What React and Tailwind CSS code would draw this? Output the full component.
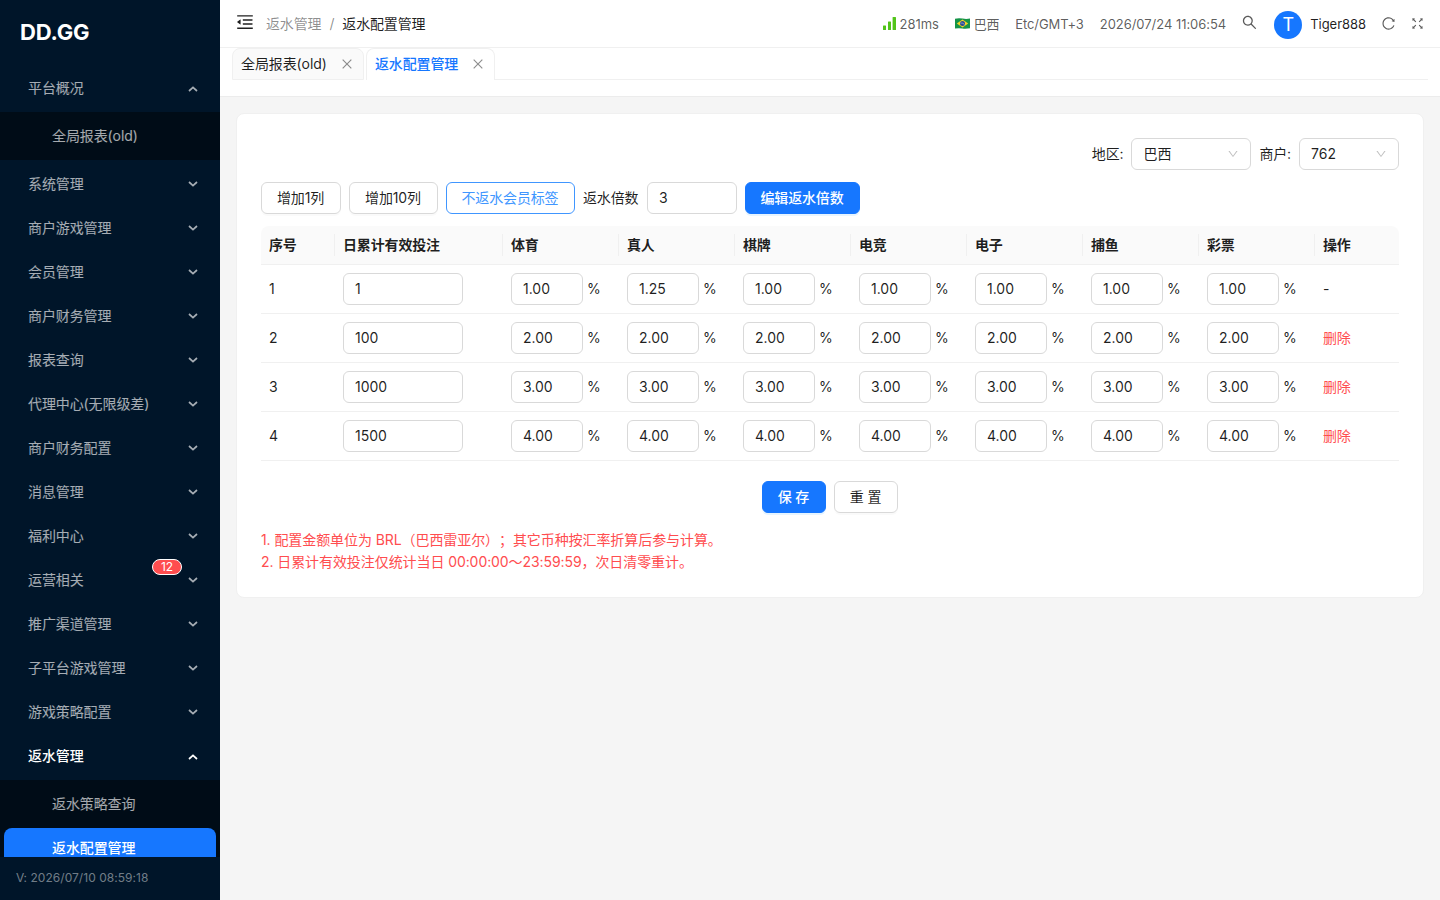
import {
  AiOutlineClose,
  AiOutlineDown,
  AiOutlineFullscreen,
  AiOutlineMenuFold,
  AiOutlineReload,
  AiOutlineSearch,
} from "react-icons/ai";

const MENU_TOP = [
  { title: "平台概况", open: true },
];

const MENU = [
  { title: "系统管理" },
  { title: "商户游戏管理" },
  { title: "会员管理" },
  { title: "商户财务管理" },
  { title: "报表查询" },
  { title: "代理中心(无限级差)" },
  { title: "商户财务配置" },
  { title: "消息管理" },
  { title: "福利中心" },
  { title: "运营相关", badge: 12 },
  { title: "推广渠道管理" },
  { title: "子平台游戏管理" },
  { title: "游戏策略配置" },
  { title: "返水管理", open: true, selected: true },
];

const CATEGORIES = ["体育", "真人", "棋牌", "电竞", "电子", "捕鱼", "彩票"];

const ROWS = [
  { id: 1, bet: "1", rates: ["1.00", "1.25", "1.00", "1.00", "1.00", "1.00", "1.00"] },
  { id: 2, bet: "100", rates: Array(7).fill("2.00") },
  { id: 3, bet: "1000", rates: Array(7).fill("3.00") },
  { id: 4, bet: "1500", rates: Array(7).fill("4.00") },
];

const Arrow = ({ open }) => (
  <svg
    width="10"
    height="6"
    viewBox="0 0 10 6"
    fill="none"
    stroke="currentColor"
    strokeWidth="1.7"
    className={open ? "mt-px shrink-0" : "mb-px shrink-0"}
  >
    <path d={open ? "M1 5 5 1.4 9 5" : "M1 1 5 4.6 9 1"} />
  </svg>
);

const MenuItem = ({ item }) => (
  <div
    className={`relative mx-1 my-1 flex h-10 shrink-0 items-center justify-between pr-[18px] pl-6 ${
      item.selected ? "font-medium text-white" : "text-white/65"
    }`}
  >
    <span>{item.title}</span>
    <Arrow open={item.open} />
    {item.badge && (
      <span className="absolute top-[-1px] right-[34px] flex h-[16px] w-[30px] items-center justify-center rounded-full border border-white bg-[#ff4d4f] text-xs leading-none text-white">
        {item.badge}
      </span>
    )}
  </div>
);

const Sidebar = () => (
  <aside className="flex h-full w-[220px] shrink-0 flex-col bg-[#001529] tracking-[-0.1px]">
    <div className="flex h-16 shrink-0 items-center pl-5 text-[22px] font-bold tracking-[-0.15px] text-white">
      DD.GG
    </div>
    <nav className="flex min-h-0 flex-1 flex-col overflow-hidden">
      {MENU_TOP.map((item) => (
        <MenuItem key={item.title} item={item} />
      ))}
      <div className="flex h-12 shrink-0 items-center bg-[#000c17] pl-[52px] text-white/65">
        全局报表(old)
      </div>
      <div className="flex shrink-0 flex-col">
        {MENU.map((item) => (
          <div key={item.title} className="-mb-1 last:mb-0">
            <MenuItem item={item} />
          </div>
        ))}
      </div>
      <div className="shrink-0 bg-[#000c17] pt-1">
        <div className="mb-1 flex h-10 items-center pl-[52px] text-white/65">
          返水策略查询
        </div>
        <div className="mx-1 flex h-10 items-center rounded-lg bg-[#1677ff] pl-12 font-medium text-white">
          返水配置管理
        </div>
      </div>
    </nav>
    <div className="flex h-[43px] shrink-0 items-center pb-0.5 pl-4 text-xs tracking-[0.04px] text-white/45">
      V: 2026/07/10 08:59:18
    </div>
  </aside>
);

const SignalIcon = () => (
  <svg width="13" height="13" viewBox="0 0 13 13" fill="#52c41a">
    <rect x="0" y="8.5" width="3" height="4.5" rx="0.5" />
    <rect x="5" y="4.5" width="3" height="8.5" rx="0.5" />
    <rect x="9.6" y="0" width="3.4" height="13" rx="0.5" />
  </svg>
);

const BrazilFlag = () => (
  <svg width="15" height="11" viewBox="0 0 15 11">
    <path d="M0 .8Q3.5-.2 7.5.6T15 .5V10.2Q11 11 7.5 10.5T0 10.5Z" fill="#159447" />
    <path d="M1.8 5.5 7.5 1.5 13.2 5.5 7.5 9.5Z" fill="#f5d327" />
    <circle cx="7.5" cy="5.5" r="2.5" fill="#294a94" />
    <path d="M5.400 5Q7.600 4.700 9.500 6.300" stroke="#d7e2ed" strokeWidth=".5" fill="none" />
  </svg>
);

const Header = () => (
  <header className="flex h-12 shrink-0 items-center border-b border-[#f0f0f0] bg-white pr-[15px] pl-[15px]">
    <AiOutlineMenuFold className="mb-1 size-5 text-black/88" />
    <div className="ml-[11px] flex">
      <span className="text-black/45">返水管理</span>
      <span className="mx-2 text-black/45">/</span>
      <span className="text-black/88">返水配置管理</span>
    </div>
    <div className="ml-auto flex items-center text-[13px] tracking-[-0.04px] text-black/65">
      <SignalIcon />
      <span className="ml-1">281ms</span>
      <span className="mr-1 ml-4">
        <BrazilFlag />
      </span>
      <span className="tracking-[-0.3px]">巴西</span>
      <span className="ml-4 tracking-[-0.1px]">Etc/GMT+3</span>
      <span className="ml-4">2026/07/24 11:06:54</span>
      <AiOutlineSearch className="mb-[3px] ml-[15px] size-[17px]" />
      <span className="mt-[3px] ml-4 flex size-7 items-center justify-center rounded-full bg-[#1677ff] text-lg text-white">
        T
      </span>
      <span className="ml-2 text-black/88">Tiger888</span>
      <AiOutlineReload className="mb-px ml-[15px] size-[15px]" />
      <AiOutlineFullscreen className="mb-px ml-3.5 size-[15px]" />
    </div>
  </header>
);

const Tabs = () => (
  <div className="flex h-[49px] shrink-0 flex-col border-b border-[#ececec] bg-white px-3">
    <div className="flex h-8 gap-0.5">
      <div className="flex w-[132px] items-center justify-between rounded-t-lg border border-[#f0f0f0] bg-[#fafafa] px-2 tracking-[-0.1px] text-black/88">
        全局报表(old)
        <AiOutlineClose className="mr-px size-3.5 text-black/45" />
      </div>
      <div className="flex w-[129px] items-center justify-between rounded-t-lg border border-b-0 border-[#f0f0f0] px-2 pb-px font-medium text-[#1677ff]">
        返水配置管理
        <AiOutlineClose className="mr-px size-3.5 text-black/45" />
      </div>
      <div className="-ml-0.5 flex-1 border-b border-[#f0f0f0]" />
    </div>
  </div>
);

const Select = ({ value, className }) => (
  <div
    className={`flex h-8 items-center justify-between rounded-md border border-[#d9d9d9] bg-white px-[11px] tracking-[0px] ${className}`}
  >
    {value}
    <AiOutlineDown className="size-3 text-black/25" />
  </div>
);

const Field = ({ value, className }) => (
  <input
    defaultValue={value}
    className={`h-8 rounded-md border border-[#d9d9d9] bg-white px-[11px] pb-0.5 tracking-[0px] outline-none ${className}`}
  />
);

const Th = ({ children, last }) => (
  <div className="relative flex items-center px-2">
    {children}
    {!last && <span className="absolute top-2 right-0 h-[22px] w-px bg-[#f0f0f0]" />}
  </div>
);

const COLS = "grid grid-cols-[74px_168px_repeat(7,116px)_84px]";

const RateTable = () => (
  <div className="mt-3">
    <div className={`${COLS} h-[39px] rounded-t-lg border-b border-[#f0f0f0] bg-[#fafafa] font-semibold`}>
      <Th>序号</Th>
      <Th>日累计有效投注</Th>
      {CATEGORIES.map((c) => (
        <Th key={c}>{c}</Th>
      ))}
      <Th last>操作</Th>
    </div>
    {ROWS.map((row) => (
      <div key={row.id} className={`${COLS} h-[49px] items-center border-b border-[#f0f0f0]`}>
        <span className="px-2">{row.id}</span>
        <span className="px-2">
          <Field value={row.bet} className="w-[120px]" />
        </span>
        {row.rates.map((rate, i) => (
          <span key={i} className="flex items-center gap-1 px-2">
            <Field value={rate} className="w-[72px]" />%
          </span>
        ))}
        <span className="px-2">
          {row.id === 1 ? "-" : <a className="text-[#ff4d4f]">删除</a>}
        </span>
      </div>
    ))}
  </div>
);

const Button = ({ children, className }) => (
  <button
    className={`flex h-8 shrink-0 items-center justify-center rounded-md border pr-px whitespace-nowrap ${className}`}
  >
    {children}
  </button>
);

export default function App() {
  return (
    <div className="flex h-[900px] w-[1440px] overflow-hidden bg-[#f5f5f5] font-['Inter','Noto_Sans_CJK_SC',sans-serif] text-sm leading-[22px] tracking-[-0.15px] text-black/88">
      <Sidebar />
      <div className="flex min-w-0 flex-1 flex-col">
        <Header />
        <Tabs />
        <main className="m-4 rounded-lg border border-[#f0f0f0] bg-white p-6">
          <div className="flex items-center justify-end">
            <span>地区:</span>
            <Select value="巴西" className="ml-2 w-[120px]" />
            <span className="ml-2">商户:</span>
            <Select value="762" className="ml-2 w-[100px]" />
          </div>
          <div className="mt-3 flex items-center gap-2">
            <Button className="w-20 border-[#d9d9d9] shadow-[0_2px_0_rgba(0,0,0,0.02)]">增加1列</Button>
            <Button className="w-[89px] border-[#d9d9d9] shadow-[0_2px_0_rgba(0,0,0,0.02)]">增加10列</Button>
            <Button className="w-[129px] border-[#4096ff] text-[#4096ff]">不返水会员标签</Button>
            <span className="w-14">返水倍数</span>
            <Field value="3" className="w-[90px]" />
            <Button className="w-[115px] border-[#1677ff] bg-[#1677ff] font-medium text-white shadow-[0_2px_0_rgba(5,145,255,0.1)]">
              编辑返水倍数
            </Button>
          </div>
          <RateTable />
          <div className="mt-5 flex justify-center gap-2">
            <Button className="w-16 border-[#1677ff] bg-[#1677ff] font-medium text-white shadow-[0_2px_0_rgba(5,145,255,0.1)]">
              保 存
            </Button>
            <Button className="w-16 border-[#d9d9d9] shadow-[0_2px_0_rgba(0,0,0,0.02)]">重 置</Button>
          </div>
          <div className="mt-4 tracking-[-0.08px] text-[#ff4d4f] [text-spacing-trim:space-all]">
            <p>1. 配置金额单位为 BRL（巴西雷亚尔）；其它币种按汇率折算后参与计算。</p>
            <p>2. 日累计有效投注仅统计当日 00:00:00～23:59:59，次日清零重计。</p>
          </div>
        </main>
      </div>
    </div>
  );
}
